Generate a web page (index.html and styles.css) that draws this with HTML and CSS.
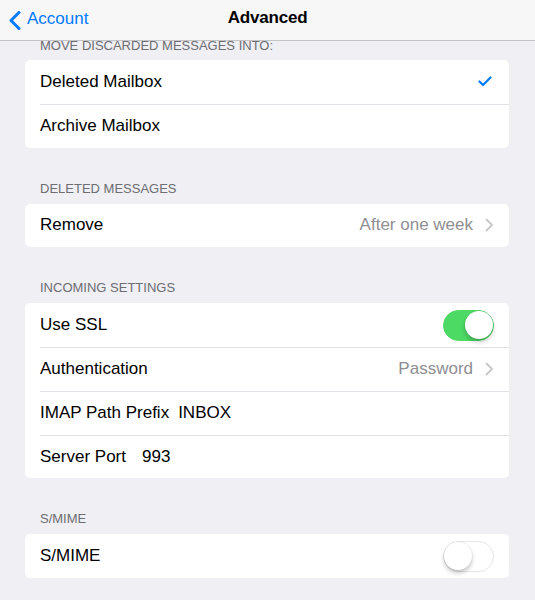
FILE: index.html
```html
<!DOCTYPE html>
<html>
<head>
<meta charset="utf-8">
<link rel="stylesheet" href="styles.css">
</head>
<body>
<div class="screen">
  <header class="nav">
    <div class="back">
      <svg class="back-chevron" width="14" height="19" viewBox="0 0 14 19"><polyline points="11,1.5 3,9.5 11,17.5" fill="none" stroke="#007aff" stroke-width="3" stroke-linecap="round" stroke-linejoin="round"/></svg>
      <span>Account</span>
    </div>
    <div class="title">Advanced</div>
  </header>

  <div class="section-header first">MOVE DISCARDED MESSAGES INTO:</div>
  <div class="card">
    <div class="row">
      <span class="label">Deleted Mailbox</span>
      <svg class="check" width="14" height="11" viewBox="0 0 14 11"><polyline points="1.5,5.5 5,9 12.5,1.5" fill="none" stroke="#007aff" stroke-width="2.2" stroke-linecap="round" stroke-linejoin="round"/></svg>
    </div>
    <div class="row">
      <span class="label">Archive Mailbox</span>
    </div>
  </div>

  <div class="section-header">DELETED MESSAGES</div>
  <div class="card">
    <div class="row">
      <span class="label">Remove</span>
      <span class="value">After one week</span>
      <svg class="chevron" width="9" height="14" viewBox="0 0 9 14"><polyline points="1.5,1.5 7,7 1.5,12.5" fill="none" stroke="#c7c7cc" stroke-width="1.8" stroke-linecap="round" stroke-linejoin="round"/></svg>
    </div>
  </div>

  <div class="section-header">INCOMING SETTINGS</div>
  <div class="card">
    <div class="row">
      <span class="label">Use SSL</span>
      <div class="toggle on"><div class="knob"></div></div>
    </div>
    <div class="row">
      <span class="label">Authentication</span>
      <span class="value">Password</span>
      <svg class="chevron" width="9" height="14" viewBox="0 0 9 14"><polyline points="1.5,1.5 7,7 1.5,12.5" fill="none" stroke="#c7c7cc" stroke-width="1.8" stroke-linecap="round" stroke-linejoin="round"/></svg>
    </div>
    <div class="row">
      <span class="label">IMAP Path Prefix</span>
      <span class="field">INBOX</span>
    </div>
    <div class="row">
      <span class="label">Server Port</span>
      <span class="field wide">993</span>
    </div>
  </div>

  <div class="section-header">S/MIME</div>
  <div class="card">
    <div class="row">
      <span class="label">S/MIME</span>
      <div class="toggle"><div class="knob"></div></div>
    </div>
  </div>
</div>
</body>
</html>
```

FILE: styles.css
```css
* { box-sizing: border-box; }
html, body {
  margin: 0;
  padding: 0;
  background: #efeff4;
}
body {
  font-family: "Liberation Sans", Arial, sans-serif;
  color: #000;
  width: 535px;
  height: 600px;
  overflow: hidden;
}
.screen {
  display: flex;
  flex-direction: column;
}
.nav {
  height: 41px;
  background: #f7f7f8;
  border-bottom: 1px solid #c4c4c7;
  display: flex;
  align-items: center;
  justify-content: center;
  position: relative;
  padding-bottom: 5px;
}
.back {
  position: absolute;
  left: 8px;
  top: 10px;
  display: flex;
  align-items: center;
  gap: 5px;
  color: #007aff;
  font-size: 17px;
}
.back-chevron { display: block; }
.back span { position: relative; top: -1px; }
.title {
  font-size: 17px;
  font-weight: bold;
  letter-spacing: -0.2px;
}
.section-header {
  height: 56px;
  padding: 0 40px 7px;
  display: flex;
  align-items: flex-end;
  font-size: 13px;
  line-height: 16px;
  color: #6d6d72;
}
.section-header.first {
  height: 19px;
  padding-bottom: 6px;
}
.card {
  margin-left: 25px;
  width: 484px;
  background: #fff;
  border-radius: 5px;
  overflow: hidden;
}
.row {
  height: 43.75px;
  margin-left: 15px;
  padding-right: 15px;
  display: flex;
  align-items: center;
  font-size: 17px;
  border-top: 1px solid #e0e0e4;
}
.row:first-child { border-top: none; }
.label { flex: 0 0 auto; }
.value {
  margin-left: auto;
  color: #8e8e93;
}
.chevron {
  margin-left: 12px;
  display: block;
}
.check {
  margin-left: auto;
  margin-right: 2px;
  display: block;
}
.field { margin-left: 9px; }
.field.wide { margin-left: 16px; }
.toggle {
  margin-left: auto;
  width: 51px;
  height: 31px;
  border-radius: 16px;
  border: 1.5px solid #e5e5ea;
  background: #fff;
  position: relative;
}
.toggle .knob {
  position: absolute;
  top: 0;
  left: 0;
  width: 28px;
  height: 28px;
  border-radius: 50%;
  background: #fff;
  box-shadow: 0 3px 4px rgba(0,0,0,0.22), 0 0 0 0.5px rgba(0,0,0,0.08);
}
.toggle.on {
  background: #4cd964;
  border-color: #4cd964;
}
.toggle.on .knob {
  left: auto;
  right: 0;
}
```
